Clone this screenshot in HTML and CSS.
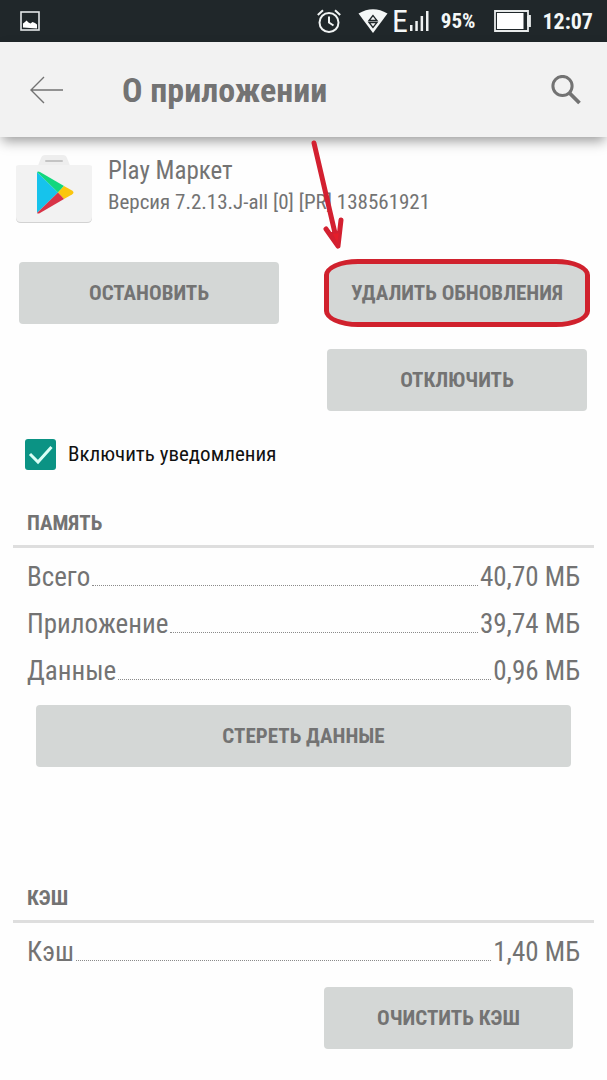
FILE: index.html
```html
<!DOCTYPE html>
<html lang="ru">
<head>
<meta charset="utf-8">
<meta name="viewport" content="width=device-width, initial-scale=1">
<title>О приложении</title>
<link rel="stylesheet" href="styles.css">
</head>
<body>
<div class="status">
  <svg class="status-picture" width="20" height="20" viewBox="0 0 20 20" aria-hidden="true">
    <rect x="1" y="1" width="18" height="18" fill="none" stroke="#e4e8e9" stroke-width="1.600"/>
    <path d="M3 16.500V12.500l2-1.500 1.500-1.500 2 2 2 1 2-1.500 2.500 1 2 1.500v4z" fill="#fff"/>
  </svg>
  <svg class="status-alarm" width="24" height="24" viewBox="0 0 24 24" fill="none" stroke="#f0f3f3" stroke-width="2" aria-hidden="true">
    <circle cx="12" cy="13.500" r="9.500"/>
    <path d="M12 7.500v6l4.500 3M.8 6 6 1.200M23.200 6 18 1.200"/>
  </svg>
  <svg class="status-wifi" width="30" height="24" viewBox="0 0 30 24" aria-hidden="true">
    <path d="M.5 4.500Q15-4 29.500 4.500L15 24z" fill="#f4f7f7"/>
    <path d="m15 6.500-4 5h8zM15 18.500l-4-5h8z" fill="none" stroke="#20272a" stroke-width="1.300"/>
  </svg>
  <span class="status-network">E</span>
  <svg class="status-signal" width="19" height="20" viewBox="0 0 19 20" fill="#eef1f1" aria-hidden="true">
    <path d="M0 14h2.500v6H0zM5.300 10h2.500v10H5.300zM10.600 5h2.500v15h-2.500zM16 0h2.500v20H16z"/>
  </svg>
  <span class="status-percent">95%</span>
  <svg class="status-battery" width="37" height="22" viewBox="0 0 37 22" aria-hidden="true">
    <path d="M1 1h33v5h2v10h-2v5H1z" fill="none" stroke="#e8ebeb" stroke-width="1.800"/>
    <path d="M3 3h26.500v16H3z" fill="#fff"/>
    <path d="M33 6h3v10h-3z" fill="#e8ebeb"/>
  </svg>
  <span class="status-time">12:07</span>
</div>
<header class="appbar">
  <button class="icon-button" aria-label="Назад">
    <svg width="34" height="28" viewBox="0 0 34 28" fill="none" stroke="#737373" stroke-width="1.400"><path d="M33 14H1M14 1 1 14l13 13"/></svg>
  </button>
  <h1 class="appbar-title">О приложении</h1>
  <button class="icon-button" aria-label="Поиск">
    <svg width="30" height="30" viewBox="0 0 30 30" fill="none" stroke="#737373" stroke-width="3"><circle cx="11.500" cy="11" r="9.600"/><path d="m18 17.500 10.500 10.500" stroke-width="3.800"/></svg>
  </button>
</header>
<main class="content">
  <section class="app">
    <svg class="app-icon" width="78" height="70" viewBox="0 0 78 70" aria-hidden="true">
      <path d="M22 14 26 4q1-3 4-3h18q3 0 4 3l4 10" fill="#eeeeee"/>
      <path d="M1 13h76v51q0 5-5 5H6q-5 0-5-5z" fill="#d2d2d2"/>
      <path d="M1 13q0-2 3-2h70q3 0 3 2v50q0 5-5 5H6q-5 0-5-5z" fill="#f2f2f2"/>
      <rect x="30" y="6" width="18" height="2" rx="1" fill="#c4c4c4"/>
      <path d="M22 18v41l21-20.500z" fill="#16c3ec"/>
      <path d="M22 18q1-1 3 0l24 14-6 6.500z" fill="#12d77d"/>
      <path d="m49 32 8 4.500q3 2 0 4L49 45l-6-6.500z" fill="#fbc60d"/>
      <path d="m43 38.500 6 6.500-24 14q-2 1-3 0z" fill="#d83447"/>
    </svg>
    <div class="app-text">
      <h2 class="app-name">Play Маркет</h2>
      <p class="app-version">Версия 7.2.13.J-all [0] [PR] 138561921</p>
    </div>
  </section>
  <div class="actions">
    <button class="button">ОСТАНОВИТЬ</button>
    <div class="marked">
      <button class="button">УДАЛИТЬ ОБНОВЛЕНИЯ</button>
      <span class="ring"></span>
      <svg class="arrow" width="34" height="112" viewBox="0 0 34 112" fill="none" stroke="#d32030" stroke-width="5" stroke-linecap="round" stroke-linejoin="round" aria-hidden="true">
        <path d="m3 5 24 103M15 91l12 17 3-26"/><path d="m20 95 7 13 2-14z" fill="#e41e2a" stroke-width="2"/>
      </svg>
    </div>
    <button class="button actions-second">ОТКЛЮЧИТЬ</button>
  </div>
  <label class="notify">
    <input class="notify-box" type="checkbox" checked>
    <svg class="notify-tick" width="31" height="31" viewBox="0 0 31 31" fill="none" stroke="#d9fff5" stroke-width="3" aria-hidden="true"><path d="m5 15 8 8L26.500 8"/></svg>
    <span>Включить уведомления</span>
  </label>
  <section class="group">
    <h2 class="group-title">ПАМЯТЬ</h2>
    <dl class="rows">
      <div class="row"><dt>Всего</dt><dd>40,70 МБ</dd></div>
      <div class="row"><dt>Приложение</dt><dd>39,74 МБ</dd></div>
      <div class="row"><dt>Данные</dt><dd>0,96 МБ</dd></div>
    </dl>
    <div class="group-action"><button class="button">СТЕРЕТЬ ДАННЫЕ</button></div>
  </section>
  <section class="group group-cache">
    <h2 class="group-title">КЭШ</h2>
    <dl class="rows">
      <div class="row"><dt>Кэш</dt><dd>1,40 МБ</dd></div>
    </dl>
    <div class="group-action group-action-half"><button class="button">ОЧИСТИТЬ КЭШ</button></div>
  </section>
</main>
</body>
</html>
```
FILE: styles.css
```css
* { box-sizing: border-box; }
body {
  margin: 0;
  background: #fefefe;
  color: #737373;
  font-family: "Roboto Condensed", "Liberation Sans Narrow", Roboto, sans-serif;
}
h1, h2, p, dl, dd { margin: 0; }
button { font: inherit; color: inherit; border: 0; cursor: pointer; }

.status {
  display: flex;
  align-items: center;
  height: 42px;
  padding: 0 14px 0 20px;
  background: #20272a;
  color: #f4f7f7;
  font-size: 22px;
  font-weight: 700;
}
.status svg { flex: none; }
.status-alarm { margin-left: auto; }
.status-wifi { margin-left: 17px; }
.status-network { margin-left: 4px; font-size: 32px; line-height: 40px; font-weight: 400; }
.status-signal { margin-left: 2px; }
.status-percent { margin-left: 12px; font-size: 21px; }
.status-battery { margin-left: 18px; }
.status-time { margin-left: 12px; }

.appbar {
  display: flex;
  align-items: center;
  height: 95px;
  padding: 0 26px 0 30px;
  background: #f2f2f2;
  box-shadow: 0 6px 12px -2px rgba(0, 0, 0, 0.4);
}
.icon-button { display: flex; padding: 0; background: none; }
.appbar-title { flex: 1; margin-left: 58px; font-size: 34px; line-height: 42px; font-weight: 700; }

.app { display: flex; gap: 15px; padding: 17px 15px 0; }
.app-icon { flex: none; }
.app-name { font-size: 25px; line-height: 34px; font-weight: 400; }
.app-version { font-size: 21px; line-height: 28px; }

.actions {
  display: grid;
  grid-template-columns: 1fr 1fr;
  gap: 25px 48px;
  padding: 38px 20px 0 19px;
}
.actions-second { grid-column: 2; }
.button {
  width: 100%;
  height: 62px;
  padding: 0;
  border-radius: 4px;
  background: #d4d7d6;
  font-size: 21px;
  font-weight: 700;
  white-space: nowrap;
}
.marked { position: relative; }
.marked .button { border-radius: 30px / 14px; }
.ring {
  position: absolute;
  inset: -3px;
  border: 5px solid #d0212d;
  border-radius: 34px / 16px;
  pointer-events: none;
}
.arrow { position: absolute; left: -16px; top: -124px; pointer-events: none; }

.notify {
  position: relative;
  display: flex;
  align-items: center;
  gap: 12px;
  margin: 28px 25px 0;
  color: #111;
  font-size: 21px;
  line-height: 31px;
}
.notify-box { appearance: none; width: 31px; height: 31px; margin: 0; border-radius: 3px; background: #0b9384; }
.notify-tick { position: absolute; left: 0; top: 0; visibility: hidden; pointer-events: none; }
.notify-box:checked + .notify-tick { visibility: visible; }

.group { margin: 37px 13px 0; }
.group-cache { margin-top: 115px; }
.group-title {
  padding: 0 14px 6px;
  border-bottom: 3px solid #dedede;
  font-size: 21px;
  line-height: 32px;
  font-weight: 700;
}
.rows { padding: 6px 14px 0; }
.row { display: flex; align-items: baseline; gap: 2px; font-size: 27px; line-height: 47px; }
.row::after { content: ""; flex: 1; order: 1; height: 1px; border-bottom: 1px dotted #8a8a8a; }
.row dd { order: 2; }
.group-action { padding: 10px 23px 0; }
.group-action-half { width: 47%; margin-left: auto; padding: 11px 21px 0 3px; }
```
